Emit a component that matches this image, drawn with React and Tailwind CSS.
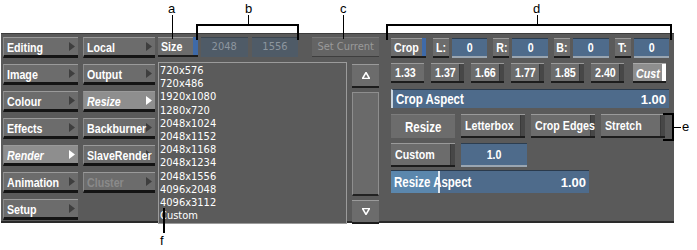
import React from "react";

const font = { fontFamily: '"Liberation Sans", Arial, sans-serif' };
const listFont = { fontFamily: '"DejaVu Sans Condensed", "DejaVu Sans", sans-serif' };

// narrow bold label, like the Discreet UI font
function T({ children, center, className = "" }) {
  return (
    <span
      className={`inline-block whitespace-nowrap font-bold leading-none scale-x-[0.82] ${center ? "origin-center" : "origin-left"} ${className}`}
    >
      {children}
    </span>
  );
}

function Arrow({ light }) {
  return (
    <svg width="6" height="9" viewBox="0 0 6 9" className="shrink-0">
      <path d="M0 0 L6 4.5 L0 9 Z" fill={light ? "#ffffff" : "#3e3e3e"} />
    </svg>
  );
}

function MenuBtn({ label, active, dim, width }) {
  return (
    <div
      className={`${width} h-[21px] flex items-center pl-[3px] pr-[3px] border-t border-t-[#9a9a9a] border-l border-l-[#8a8a8a] border-b-[3px] border-b-[#141414] ${
        active ? "bg-[#8e8e8e]" : "bg-[#6c6c6c]"
      }`}
    >
      <div className="w-0 grow">
        <T className={`text-[13px] ${active ? "italic text-white" : dim ? "text-[#8a8a8a]" : "text-white"}`}>{label}</T>
      </div>
      <Arrow light={active} />
    </div>
  );
}

function GrayBtn({ children, className = "", strip }) {
  return (
    <div className={`h-[20px] flex items-center border-t border-t-[#9a9a9a] border-b-2 border-b-[#1c1c1c] ${className}`}>
      <div className="w-0 grow h-full flex items-center px-[4px]">
        <T className="text-[13px]">{children}</T>
      </div>
      {strip && <div className="w-[5px] h-full bg-[#474747] border-l border-l-[#3a3a3a]" />}
    </div>
  );
}

function Field({ children, className = "" }) {
  return (
    <div className={`h-[20px] flex items-center justify-center bg-[#4e6b8b] border-t border-t-[#2c3d4f] border-b-2 border-b-[#9aa6b2] text-white ${className}`}>
      <T center className="text-[13px]">{children}</T>
    </div>
  );
}

function Label({ children }) {
  return (
    <div className="w-[16px] h-[20px] flex items-center justify-center bg-[#6c6c6c] border-t border-t-[#9a9a9a] border-b-2 border-b-[#1c1c1c] text-white">
      <T center className="text-[13px]">{children}</T>
    </div>
  );
}

const sizes = [
  "720x576",
  "720x486",
  "1920x1080",
  "1280x720",
  "2048x1024",
  "2048x1152",
  "2048x1168",
  "2048x1234",
  "2048x1556",
  "4096x2048",
  "4096x3112",
  "Custom",
];

export default function App() {
  const col1 = ["Editing", "Image", "Colour", "Effects", "Render", "Animation", "Setup"];
  const col2 = ["Local", "Output", "Resize", "Backburner", "SlaveRender", "Cluster"];

  return (
    <div className="relative w-[697px] h-[250px] bg-white overflow-hidden" style={font}>
      {/* panel */}
      <div className="absolute left-[1px] top-[33px] w-[673px] h-[190px] bg-[#5a5a5a] border-t border-t-[#3c3c3c] border-b-2 border-b-[#2a2a2a] flex">
        {/* menus */}
        <div className="flex pl-[2px] pt-[3px] gap-[5px]">
          <div className="flex flex-col gap-[6px]">
            {col1.map((l) => (
              <MenuBtn key={l} label={l} active={l === "Render"} width="w-[75px]" />
            ))}
          </div>
          <div className="flex flex-col gap-[6px]">
            {col2.map((l) => (
              <MenuBtn key={l} label={l} active={l === "Resize"} dim={l === "Cluster"} width="w-[72px]" />
            ))}
          </div>
        </div>

        {/* size section */}
        <div className="flex flex-col ml-[3px] pt-[3px] w-[221px]">
          <div className="flex items-center h-[21px]">
            <div className="w-[35px] h-[20px] flex items-center pl-[3px] bg-[#6c6c6c] border-t border-t-[#9a9a9a] border-b-2 border-b-[#1c1c1c] text-white">
              <T className="text-[13px]">Size</T>
            </div>
            <div className="w-[5px] h-[20px] bg-[#3f6aa8] border-b-2 border-b-[#1c1c1c]" />
            <div className="w-[47px] h-[20px] ml-[3px] flex items-center justify-center bg-[#4f5b67] border-t border-t-[#3c4650] text-[#8d969f] text-[11px]" style={listFont}>
              2048
            </div>
            <div className="w-[47px] h-[20px] ml-[4px] flex items-center justify-center bg-[#4f5b67] border-t border-t-[#3c4650] text-[#8d969f] text-[11px]" style={listFont}>
              1556
            </div>
            <div className="w-[67px] h-[20px] ml-[14px] flex items-center justify-center bg-[#646464] border-t border-t-[#767676] border-b border-b-[#3e3e3e] text-[#9a9a9a] text-[11px] whitespace-nowrap" style={listFont}>
              Set Current
            </div>
          </div>
          <div className="flex mt-[5px] gap-[5px]">
            <div className="w-[190px] h-[162px] bg-[#5b5b5b] border border-[#9b9b9b] pl-[1px] pt-[1px]" style={listFont}>
              {sizes.map((s) => (
                <div key={s} className="text-white text-[11px] leading-[13.2px]">
                  {s}
                </div>
              ))}
            </div>
            <div className="flex flex-col w-[27px] pt-[2px] gap-[4px]">
              <div className="h-[24px] flex items-center justify-center bg-[#6c6c6c] border-t border-t-[#9a9a9a] border-b-2 border-b-[#1c1c1c]">
                <svg width="8" height="7" viewBox="0 0 8 7">
                  <path d="M4 0.5 L7.5 6.5 L0.5 6.5 Z" fill="none" stroke="#ffffff" strokeWidth="1.5" />
                </svg>
              </div>
              <div className="h-[104px] bg-[#6a6a6a] border border-[#8e8e8e] border-b-2 border-b-[#222]" />
              <div className="h-[24px] flex items-center justify-center bg-[#6c6c6c] border-t border-t-[#9a9a9a] border-b-2 border-b-[#1c1c1c]">
                <svg width="8" height="7" viewBox="0 0 8 7">
                  <path d="M0.5 0.5 L7.5 0.5 L4 6.5 Z" fill="none" stroke="#ffffff" strokeWidth="1.5" />
                </svg>
              </div>
            </div>
          </div>
        </div>

        {/* crop / resize section */}
        <div className="flex flex-col ml-[12px] pt-[3px] w-[278px] text-white">
          <div className="flex items-center h-[21px]">
            <div className="w-[31px] h-[20px] flex items-center pl-[3px] bg-[#6c6c6c] border-t border-t-[#9a9a9a] border-b-2 border-b-[#1c1c1c]">
              <T className="text-[13px]">Crop</T>
            </div>
            <div className="w-[4px] h-[20px] bg-[#3f6aa8] border-b-2 border-b-[#1c1c1c]" />
            <div className="ml-[7px]"><Label>L:</Label></div>
            <Field className="w-[36px] ml-[3px]">0</Field>
            <div className="ml-[6px]"><Label>R:</Label></div>
            <Field className="w-[36px] ml-[3px]">0</Field>
            <div className="ml-[6px]"><Label>B:</Label></div>
            <Field className="w-[36px] ml-[3px]">0</Field>
            <div className="ml-[6px]"><Label>T:</Label></div>
            <Field className="w-[36px] ml-[3px]">0</Field>
          </div>

          <div className="flex items-center gap-[7px] mt-[5px]">
            {["1.33", "1.37", "1.66", "1.77", "1.85", "2.40"].map((v, i) => (
              <GrayBtn key={v} strip={i > 0} className="w-[33px] bg-[#6c6c6c] text-white">
                {v}
              </GrayBtn>
            ))}
            <div className="w-[33px] h-[20px] flex items-center bg-[#8e8e8e] border-t border-t-[#aaa] border-b-2 border-b-[#1c1c1c] ml-[2px]">
              <div className="w-0 grow pl-[3px]">
                <T className="text-[13px] italic">Cust</T>
              </div>
              <div className="w-[4px] h-full bg-white" />
            </div>
          </div>

          <div className="mt-[6px] h-[19px] flex items-center justify-between px-[3px] bg-[#4e6b8b] border-t border-t-[#2a3a4c] border-l-2 border-l-[#c9d4de]">
            <T className="text-[14px]">Crop Aspect</T>
            <span className="text-[13px] font-bold leading-none">1.00</span>
          </div>

          <div className="flex items-center gap-[6px] mt-[6px]">
            <div className="w-[64px] h-[24px] flex items-center justify-center bg-[#6c6c6c] border-t border-t-[#7c7c7c]">
              <T center className="text-[14px]">Resize</T>
            </div>
            {["Letterbox", "Crop Edges", "Stretch"].map((l) => (
              <GrayBtn key={l} strip className="w-[64px] h-[24px] bg-[#6c6c6c] text-white">
                {l}
              </GrayBtn>
            ))}
          </div>

          <div className="flex items-center gap-[6px] mt-[5px]">
            <GrayBtn strip className="w-[64px] h-[24px] bg-[#6c6c6c] text-white">
              Custom
            </GrayBtn>
            <Field className="w-[66px] h-[24px]">1.0</Field>
          </div>

          <div className="mt-[3px] w-[198px] h-[23px] flex bg-[#4e6b8b] border-t border-t-[#2a3a4c] relative">
            <div className="w-[49px] h-full bg-[#5b87ad] border-r-2 border-r-[#dfe8f0]" />
            <div className="absolute inset-0 flex items-center justify-between px-[3px]">
              <T className="text-[14px]">Resize Aspect</T>
              <span className="text-[13px] font-bold leading-none">1.00</span>
            </div>
          </div>
        </div>
      </div>

      {/* callouts */}
      <div className="absolute text-black text-[13px] leading-none">
        <span className="absolute left-[168px] top-[2px]">a</span>
        <span className="absolute left-[245px] top-[2px]">b</span>
        <span className="absolute left-[340px] top-[2px]">c</span>
        <span className="absolute left-[533px] top-[2px]">d</span>
        <span className="absolute left-[682px] top-[120px]">e</span>
        <span className="absolute left-[160px] top-[234px]">f</span>
      </div>
      <div className="absolute left-[172px] top-[15px] w-[1px] h-[24px] bg-black" />
      <div className="absolute left-[196px] top-[24px] w-[103px] h-[2px] bg-black" />
      <div className="absolute left-[196px] top-[24px] w-[2px] h-[16px] bg-black" />
      <div className="absolute left-[297px] top-[24px] w-[2px] h-[16px] bg-black" />
      <div className="absolute left-[248px] top-[15px] w-[1px] h-[10px] bg-black" />
      <div className="absolute left-[343px] top-[15px] w-[1px] h-[24px] bg-black" />
      <div className="absolute left-[386px] top-[24px] w-[286px] h-[2px] bg-black" />
      <div className="absolute left-[386px] top-[24px] w-[2px] h-[16px] bg-black" />
      <div className="absolute left-[670px] top-[24px] w-[2px] h-[16px] bg-black" />
      <div className="absolute left-[537px] top-[15px] w-[1px] h-[10px] bg-black" />
      <div className="absolute left-[663px] top-[113px] w-[10px] h-[2px] bg-black" />
      <div className="absolute left-[663px] top-[139px] w-[10px] h-[2px] bg-black" />
      <div className="absolute left-[672px] top-[113px] w-[2px] h-[28px] bg-black" />
      <div className="absolute left-[673px] top-[127px] w-[8px] h-[1px] bg-black" />
      <div className="absolute left-[163px] top-[208px] w-[2px] h-[25px] bg-black" />
    </div>
  );
}
